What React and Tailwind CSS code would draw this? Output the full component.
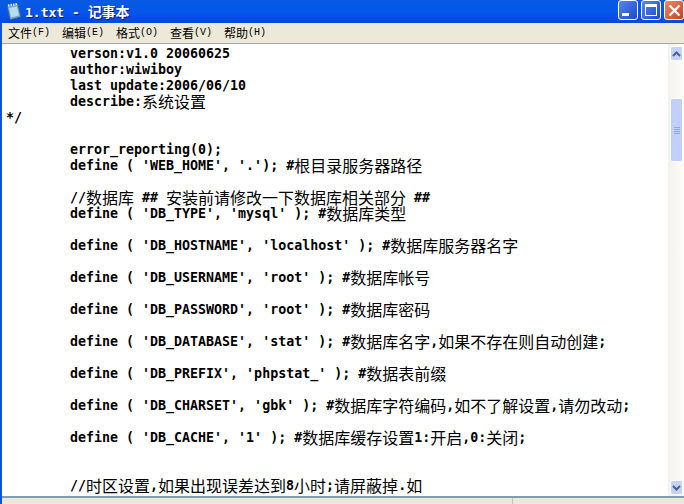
const lines = [
  "\tverson:v1.0 20060625",
  "\tauthor:wiwiboy",
  "\tlast update:2006/06/10",
  "\tdescribe:系统设置",
  "*/",
  "",
  "\terror_reporting(0);",
  "\tdefine ( 'WEB_HOME', '.'); #根目录服务器路径",
  "",
  "\t//数据库 ## 安装前请修改一下数据库相关部分 ##",
  "\tdefine ( 'DB_TYPE', 'mysql' ); #数据库类型",
  "",
  "\tdefine ( 'DB_HOSTNAME', 'localhost' ); #数据库服务器名字",
  "",
  "\tdefine ( 'DB_USERNAME', 'root' ); #数据库帐号",
  "",
  "\tdefine ( 'DB_PASSWORD', 'root' ); #数据库密码",
  "",
  "\tdefine ( 'DB_DATABASE', 'stat' ); #数据库名字,如果不存在则自动创建;",
  "",
  "\tdefine ( 'DB_PREFIX', 'phpstat_' ); #数据表前缀",
  "",
  "\tdefine ( 'DB_CHARSET', 'gbk' ); #数据库字符编码,如不了解设置,请勿改动;",
  "",
  "\tdefine ( 'DB_CACHE', '1' ); #数据库缓存设置1:开启,0:关闭;",
  "",
  "",
  "\t//时区设置,如果出现误差达到8小时;请屏蔽掉.如",
];

const menus = [
  ["文件", "(F)"],
  ["编辑", "(E)"],
  ["格式", "(O)"],
  ["查看", "(V)"],
  ["帮助", "(H)"],
];

// ascii cells are 8px, cjk cells are 16px like the old fixed font
function CodeLine({ text }) {
  const tabbed = text.startsWith("\t");
  const parts = text.replace("\t", "").match(/[\u4e00-\u9fff]+|[^\u4e00-\u9fff]+/g) || [];
  return (
    <div className={tabbed ? "h-4 pl-16 whitespace-pre flex items-center" : "h-4 whitespace-pre flex items-center"}>
      {parts.map((p, i) =>
        /[\u4e00-\u9fff]/.test(p) ? (
          <span key={i} className="-translate-y-px font-['Noto_Sans_CJK_SC',sans-serif] font-normal text-[16px] leading-4">
            {p}
          </span>
        ) : (
          <span key={i}>{p}</span>
        )
      )}
    </div>
  );
}

function CapButton({ className, children }) {
  return (
    <div className={"w-[20px] h-[20px] rounded-[3px] border border-white flex items-center justify-center " + className}>
      {children}
    </div>
  );
}

export default function App() {
  return (
    <div className="w-[684px] h-[504px] overflow-hidden flex flex-col bg-[#ece9d8] font-['Liberation_Sans',sans-serif]">
      {/* title bar */}
      <div className="h-[23px] shrink-0 flex items-center pl-[5px] bg-gradient-to-b from-[#0a5ae0] via-[#0356ee] to-[#0349d8]">
        <svg width="17" height="18" viewBox="0 0 17 18" className="shrink-0">
          <path d="M2 3l11-2 3 13-11 3z" fill="#6fa6cc" stroke="#2f6288" />
          <path d="M4 5l8-1.500 2 9-8 2z" fill="#b5dcef" />
          <path d="M3 2.500l9-1.500" stroke="#f0f4f6" strokeWidth="2" strokeDasharray="1.500 1" />
        </svg>
        <span className="ml-[3px] text-white text-[13px] font-bold whitespace-pre font-['DejaVu_Sans_Mono',monospace] leading-none [text-shadow:1px_1px_#0f1089]">
          1.txt - <span className="font-['Noto_Sans_CJK_SC',sans-serif] text-[14px]">记事本</span>
        </span>
        <div className="ml-auto self-start flex gap-[3px]">
          <CapButton className="bg-gradient-to-br from-[#5a86ee] to-[#1c47c8]">
            <div className="w-[7px] h-[3px] bg-white mt-[9px] mr-[5px]" />
          </CapButton>
          <CapButton className="bg-gradient-to-br from-[#5a86ee] to-[#1c47c8]">
            <div className="w-[12px] h-[12px] border border-white border-t-[3px]" />
          </CapButton>
          <CapButton className="bg-gradient-to-br from-[#e98a6c] to-[#c83a14]">
            <svg width="13" height="13" viewBox="0 0 13 13">
              <path d="M1.500 1.500l10 10M11.500 1.500l-10 10" stroke="#fff" strokeWidth="2.400" />
            </svg>
          </CapButton>
        </div>
      </div>

      <div className="flex-1 min-h-0 flex flex-col border-l-[2px] border-l-[#1052e0]">
        {/* menu bar */}
        <div className="h-[20px] shrink-0 flex items-center pl-[6px] gap-[12px] text-[12px] text-black font-['Noto_Sans_CJK_SC',sans-serif] leading-none">
          {menus.map(([label, key]) => (
            <span key={label} className="w-[42px] flex items-center whitespace-nowrap">
              {label}
              <span className="font-['Liberation_Mono',monospace] text-[10px]">{key}</span>
            </span>
          ))}
        </div>

        {/* edit area */}
        <div className="flex-1 min-h-0 flex border-t border-t-[#a0a8b8] border-b-[2px] border-b-[#7f9db9] bg-white">
          <div className="flex-1 min-w-0 pl-[4px] pt-[2px] overflow-hidden text-black font-['DejaVu_Sans_Mono',monospace] font-bold text-[13.3px] leading-4">
            {lines.map((l, i) => (
              <CodeLine key={i} text={l} />
            ))}
          </div>

          {/* scrollbar */}
          <div className="w-[16px] shrink-0 flex flex-col pt-[2px] pb-[1px] pl-[2px] pr-px bg-gradient-to-r from-[#f3f1ec] to-[#fdfdfa]">
            <div className="h-[15px] shrink-0 rounded-[2px] bg-[#c4d3fb] border border-white flex items-center justify-center">
              <svg width="9" height="6" viewBox="0 0 9 6">
                <path d="M1 5l3.500-3.500L8 5" stroke="#4d6185" strokeWidth="2" fill="none" />
              </svg>
            </div>
            <div className="h-[37px] shrink-0" />
            <div className="h-[64px] shrink-0 rounded-[2px] bg-[#c0d0fa] border border-white flex flex-col items-center justify-center gap-[1px]">
              <div className="w-[6px] h-[1px] bg-[#8fa8e8]" />
              <div className="w-[6px] h-[1px] bg-[#8fa8e8]" />
              <div className="w-[6px] h-[1px] bg-[#8fa8e8]" />
              <div className="w-[6px] h-[1px] bg-[#8fa8e8]" />
            </div>
            <div className="flex-1" />
            <div className="h-[15px] shrink-0 rounded-[2px] bg-[#c4d3fb] border border-white flex items-center justify-center">
              <svg width="9" height="6" viewBox="0 0 9 6">
                <path d="M1 1l3.500 3.500L8 1" stroke="#4d6185" strokeWidth="2" fill="none" />
              </svg>
            </div>
          </div>
        </div>

        {/* status bar sliver */}
        <div className="h-[6px] shrink-0 flex">
          <div className="w-[511px] border-r border-r-[#c8c4b0]" />
        </div>
      </div>
    </div>
  );
}
